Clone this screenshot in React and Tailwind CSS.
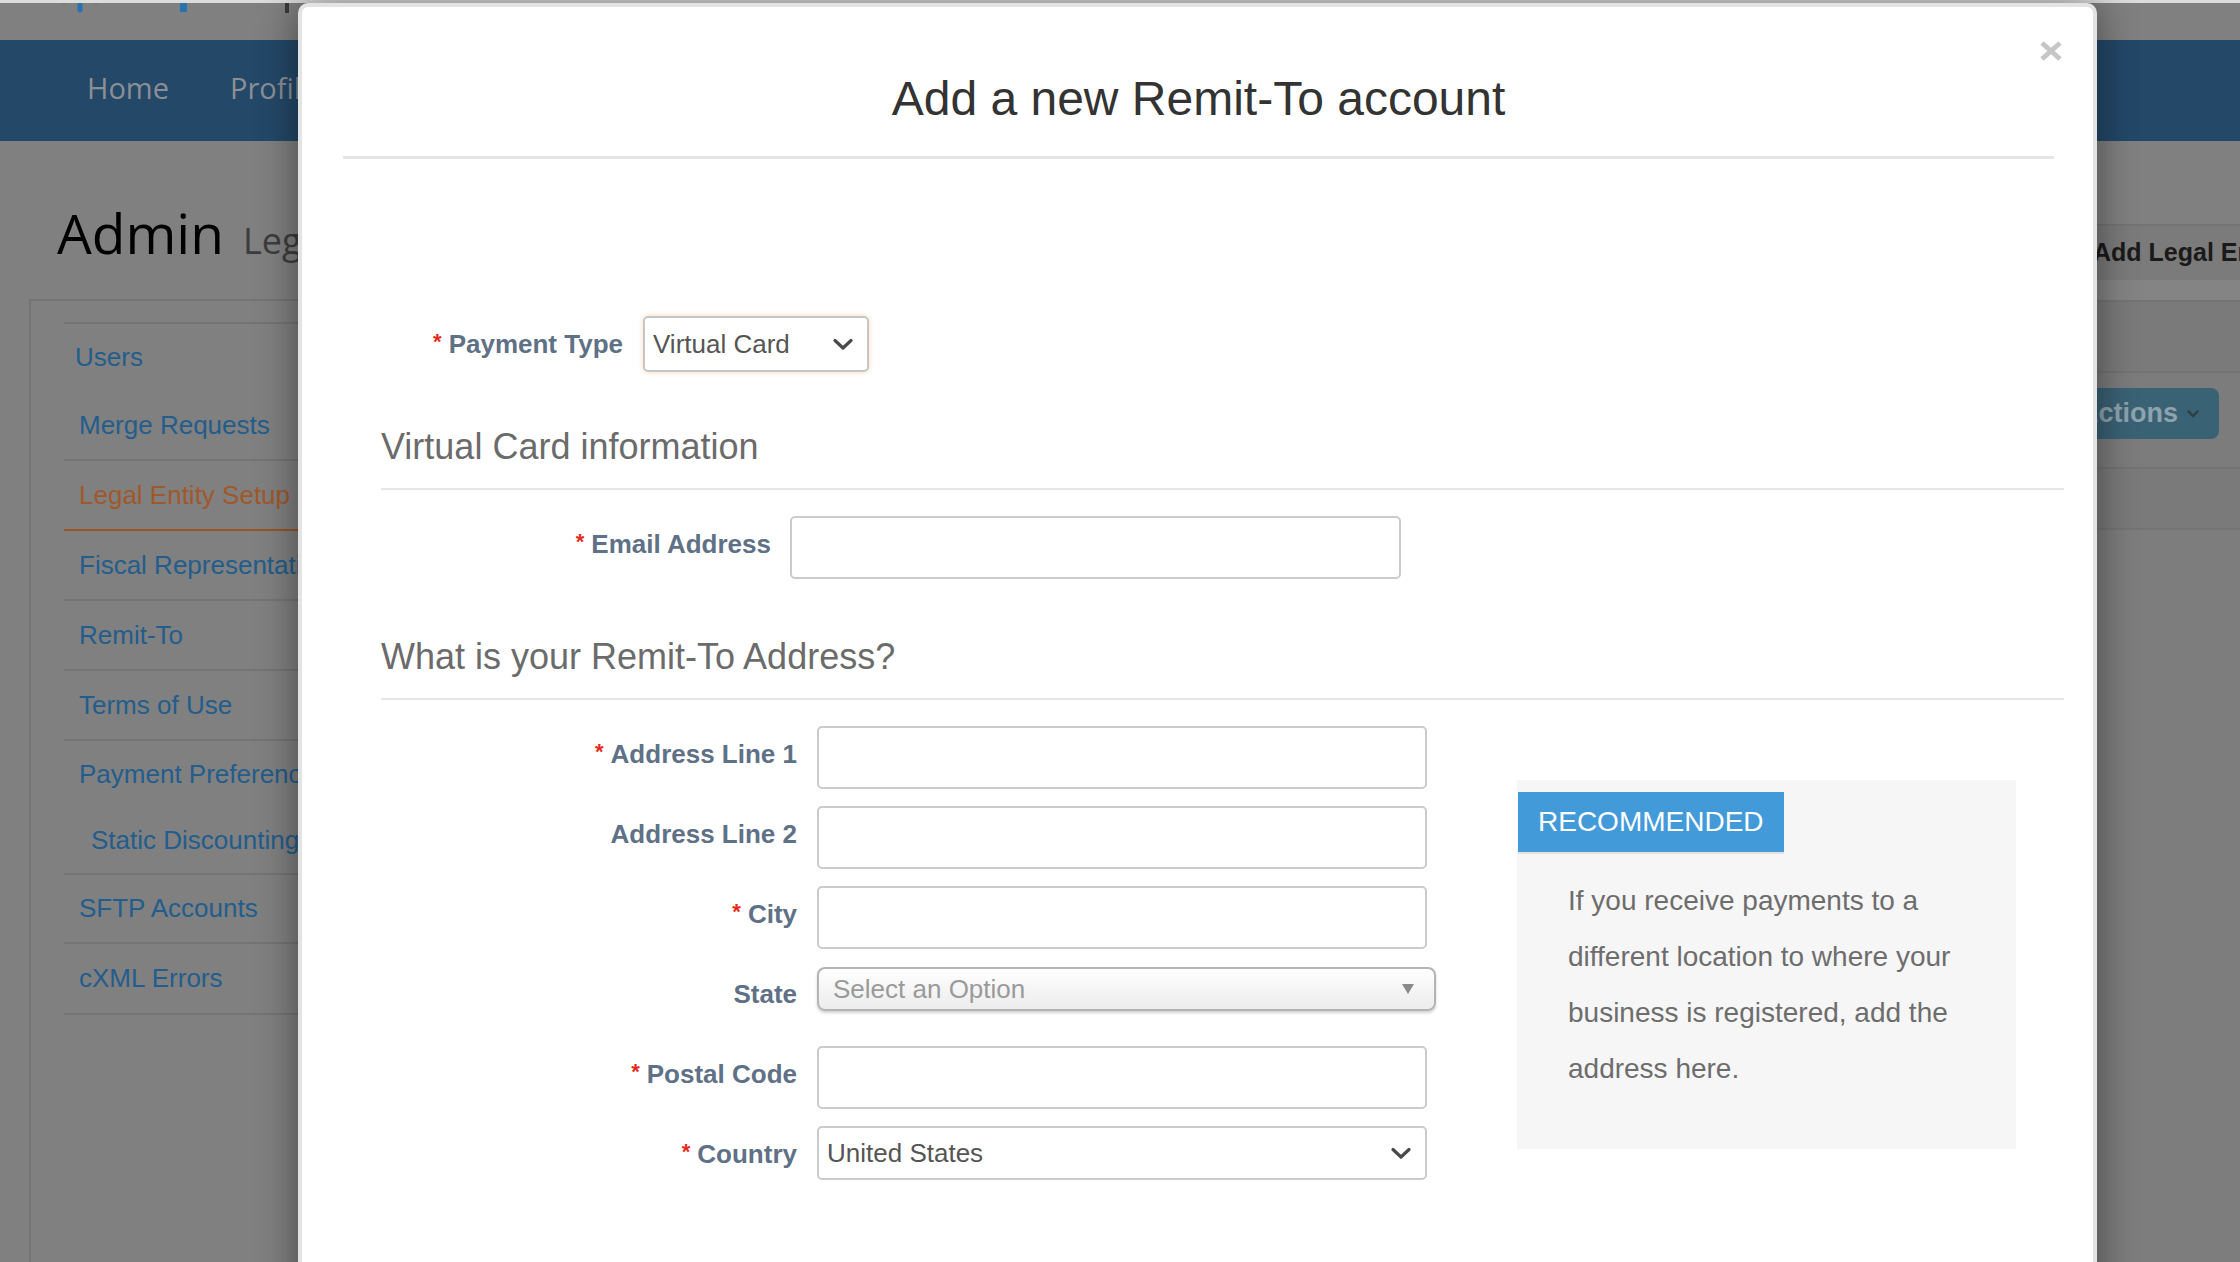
import React from 'react';

const sideItems = [
  { label: 'Users', h: 'h-[67px]', pl: 'pl-[11px]', line: false },
  { label: 'Merge Requests', h: 'h-[70px]', pl: 'pl-[15px]', line: true },
  { label: 'Legal Entity Setup', h: 'h-[70px]', pl: 'pl-[15px]', line: true, active: true },
  { label: 'Fiscal Representation', h: 'h-[70px]', pl: 'pl-[15px]', line: true },
  { label: 'Remit-To', h: 'h-[70px]', pl: 'pl-[15px]', line: true },
  { label: 'Terms of Use', h: 'h-[70px]', pl: 'pl-[15px]', line: true },
  { label: 'Payment Preferences', h: 'h-[67px]', pl: 'pl-[15px]', line: false },
  { label: 'Static Discounting', h: 'h-[67px]', pl: 'pl-[27px]', line: true },
  { label: 'SFTP Accounts', h: 'h-[69px]', pl: 'pl-[15px]', line: true },
  { label: 'cXML Errors', h: 'h-[71px]', pl: 'pl-[15px]', line: true },
];

const Chevron = () => (
  <svg width="20" height="13" viewBox="0 0 20 13" className="shrink-0">
    <polyline points="2,2.5 10,10 18,2.5" fill="none" stroke="#4a4a4a" strokeWidth="3.2" strokeLinecap="round" strokeLinejoin="round" />
  </svg>
);

const Label = ({ text, required, w }) => (
  <div className={`${w} h-[56px] flex items-center justify-end shrink-0 text-[26px] font-bold text-[#5e7186] whitespace-nowrap`}>
    {required && <span className="text-[#e52b20] text-[22px] mr-[7px] relative top-[-3px]">*</span>}
    {text}
  </div>
);

const TextInput = ({ w = 'w-[610px]' }) => (
  <input type="text" className={`${w} h-[63px] border-2 border-[#cbcbcb] rounded-[5px] bg-white outline-none`} />
);

export default function App() {
  return (
    <div className="relative w-[2240px] h-[1262px] overflow-hidden bg-[#808080] font-['Liberation_Sans',Arial,sans-serif]">
      {/* page behind the dialog (already dimmed) */}
      <div className="h-[3px] bg-[#dcdcdc]" />
      <div className="h-[37px] overflow-hidden flex items-start pl-[58px] gap-[78px]">
        <svg width="44" height="44" viewBox="0 0 44 44" className="-mt-[33px] shrink-0">
          <g stroke="#2a72ad" strokeWidth="5" strokeLinecap="round">
            <line x1="22" y1="4" x2="22" y2="40" />
            <line x1="6" y1="13" x2="38" y2="31" />
            <line x1="6" y1="31" x2="38" y2="13" />
          </g>
          <circle cx="22" cy="22" r="8" fill="#2a72ad" />
        </svg>
        <div className="w-[7px] h-[10px] bg-[#2a72ad] -mt-[1px]" />
        <div className="w-[4px] h-[10px] bg-[#3a3a3a] ml-[20px]" />
      </div>
      <nav className="h-[101px] bg-[#234868] flex items-center pl-[87px] pb-[5px] gap-[61px] font-['Open_Sans',sans-serif] text-[29px] text-[#8b8f95]">
        <span>Home</span>
        <span>Profile</span>
        <span>Invoices</span>
      </nav>

      <div className="flex">
        <div className="w-[700px] shrink-0">
          <div className="pt-[60px] pl-[57px] flex items-baseline gap-[19px] font-['Open_Sans',sans-serif] leading-[64px]">
            <span className="text-[55px] text-black">Admin</span>
            <span className="text-[36px] text-[#3d3d3d]">Legal Entity Setup</span>
          </div>
          <div className="mt-[26px] ml-[29px] h-[1000px] border-l-2 border-t-2 border-[#747474] pl-[33px] pt-[21px]">
            <div className="border-t-2 border-[#747474]">
              {sideItems.map((it) => (
                <div
                  key={it.label}
                  className={`${it.h} ${it.pl} flex items-center text-[26px] whitespace-nowrap ${it.active ? 'text-[#a0582a] border-b-2 border-[#9a5426]' : 'text-[#235d8c]'} ${it.line && !it.active ? 'border-b-2 border-[#747474]' : ''}`}
                >
                  {it.label}
                </div>
              ))}
            </div>
          </div>
        </div>

        <div className="flex-1 min-w-0 pt-[83px]">
          <div className="h-[56px] border-t-2 border-[#747474] bg-[#7b7b7b] flex items-center pl-[1393px] text-[25px] font-bold text-[#1a1a1a] whitespace-nowrap overflow-hidden">
            Add Legal Entity
          </div>
          <div className="h-[20px] bg-[#848484]" />
          <div className="h-[71px] border-t-2 border-[#747474] bg-[#7a7a7a]" />
          <div className="h-[96px] border-t-2 border-[#747474] bg-[#7c7c7c] flex items-start justify-end pr-[21px] pt-[15px]">
            <div className="h-[51px] w-[300px] rounded-[8px] bg-[#3a6275] flex items-center justify-end pr-[20px] gap-[9px] text-[27px] font-bold text-[#8ea3ad]">
              Actions
              <svg width="12" height="8" viewBox="0 0 12 8">
                <polyline points="1.5,1.5 6,6 10.5,1.5" fill="none" stroke="#2d3f48" strokeWidth="2.5" strokeLinecap="round" />
              </svg>
            </div>
          </div>
          <div className="h-[61px] border-t-2 border-[#747474] bg-[#7a7a7a]" />
          <div className="h-[800px] border-t-2 border-[#747474] bg-[#7d7d7d]" />
        </div>
      </div>

      {/* dialog */}
      <div className="absolute left-[298px] top-[3px] w-[1799px] h-[1320px] bg-white rounded-[10px] border-4 border-[#e3e3e3] shadow-[0_0_40px_rgba(0,0,0,0.45)]">
        <svg width="22" height="20" viewBox="0 0 22 20" className="absolute top-[34px] right-[31px]">
          <g stroke="#c6c6c6" strokeWidth="5">
            <line x1="2" y1="2" x2="20" y2="18" />
            <line x1="20" y1="2" x2="2" y2="18" />
          </g>
        </svg>

        <div className="ml-[41px] mr-[39px] pt-[65px] pb-[30px] border-b-[3px] border-[#e5e5e5] text-center text-[48px] leading-[54px] text-[#333333]">
          Add a new Remit-To account
        </div>

        <div className="pl-[79px] pr-[29px]">
          <div className="mt-[157px] flex gap-[20px]">
            <Label text="Payment Type" required w="w-[242px]" />
            <div className="w-[226px] h-[56px] border-2 border-[#c6c6c6] rounded-[5px] shadow-[0_0_5px_rgba(240,160,90,0.45)] flex items-center justify-between pl-[8px] pr-[14px] text-[26px] text-[#555555]">
              Virtual Card
              <Chevron />
            </div>
          </div>

          <div className="mt-[54px] pb-[20px] border-b-2 border-[#e5e5e5] text-[36px] leading-[42px] text-[#6b6b6b]">
            Virtual Card information
          </div>

          <div className="mt-[26px] flex gap-[19px]">
            <Label text="Email Address" required w="w-[390px]" />
            <TextInput w="w-[611px]" />
          </div>

          <div className="mt-[57px] pb-[20px] border-b-2 border-[#e5e5e5] text-[36px] leading-[42px] text-[#6b6b6b]">
            What is your Remit-To Address?
          </div>

          <div className="mt-[26px] flex items-start">
            <div className="flex flex-col gap-[17px]">
              <div className="flex gap-[20px]">
                <Label text="Address Line 1" required w="w-[416px]" />
                <TextInput />
              </div>
              <div className="flex gap-[20px]">
                <Label text="Address Line 2" w="w-[416px]" />
                <TextInput />
              </div>
              <div className="flex gap-[20px]">
                <Label text="City" required w="w-[416px]" />
                <TextInput />
              </div>
              <div className="flex gap-[20px] h-[63px] items-start">
                <Label text="State" w="w-[416px]" />
                <div className="w-[619px] h-[44px] mt-[1px] border-2 border-[#b4b4b4] rounded-[8px] bg-gradient-to-b from-white to-[#ececec] shadow-[0_2px_3px_rgba(0,0,0,0.18)] flex items-center justify-between pl-[14px] pr-[20px] text-[26px] text-[#9a9a9a]">
                  Select an Option
                  <svg width="12" height="10" viewBox="0 0 12 10">
                    <polygon points="0,0 12,0 6,10" fill="#8a8a8a" />
                  </svg>
                </div>
              </div>
              <div className="flex gap-[20px]">
                <Label text="Postal Code" required w="w-[416px]" />
                <TextInput />
              </div>
              <div className="flex gap-[20px]">
                <Label text="Country" required w="w-[416px]" />
                <div className="w-[610px] h-[54px] border-2 border-[#cbcbcb] rounded-[5px] flex items-center justify-between pl-[8px] pr-[14px] text-[26px] text-[#555555]">
                  United States
                  <Chevron />
                </div>
              </div>
            </div>

            <div className="ml-[81px] mt-[54px] w-[499px] bg-[#f6f6f6] pt-[12px] pb-[52px]">
              <div className="ml-[1px] w-[266px] h-[60px] bg-[#439ad9] shadow-[0_2px_0_#e2e2e2] flex items-center pl-[20px] text-[28px] text-white">
                RECOMMENDED
              </div>
              <p className="mt-[21px] pl-[51px] w-[470px] text-[28px] leading-[56px] text-[#6d6d6d]">
                If you receive payments to a different location to where your business is registered, add the address here.
              </p>
            </div>
          </div>
        </div>
      </div>
    </div>
  );
}
